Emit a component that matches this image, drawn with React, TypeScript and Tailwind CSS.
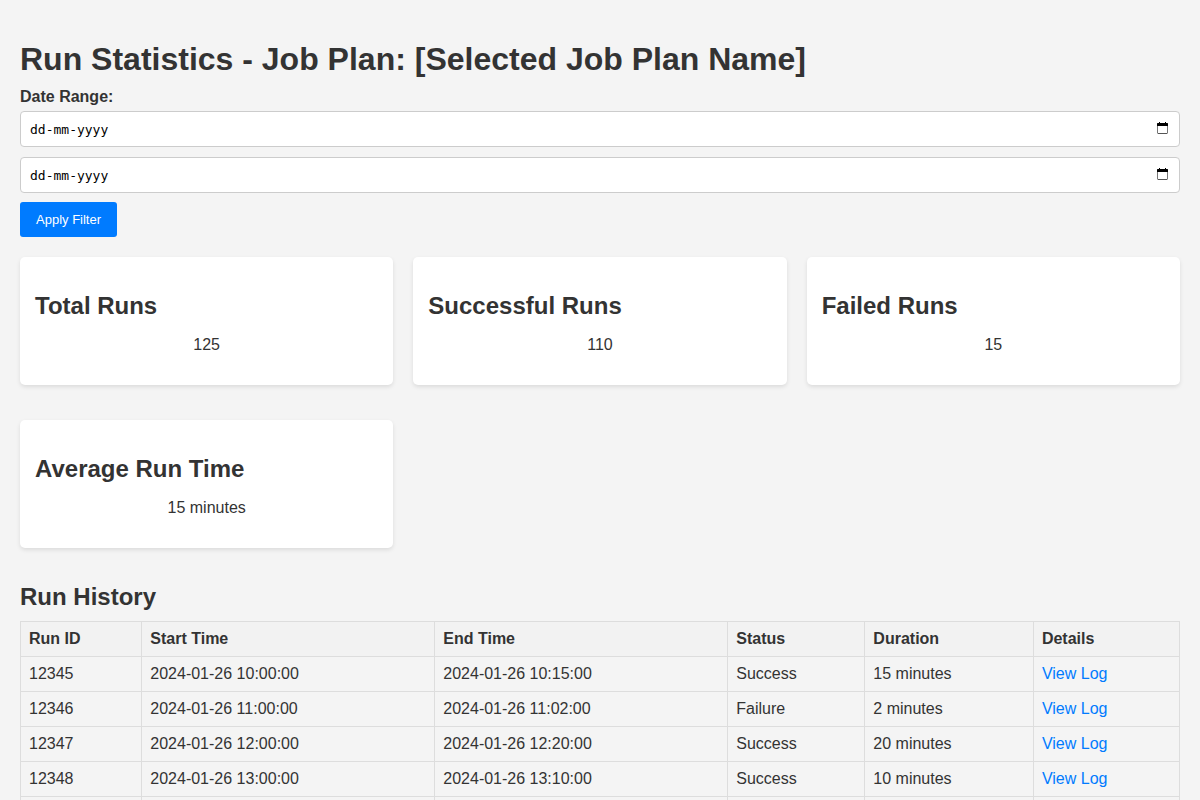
const stats = [
  { title: "Total Runs", value: "125" },
  { title: "Successful Runs", value: "110" },
  { title: "Failed Runs", value: "15" },
  { title: "Average Run Time", value: "15 minutes" },
];

const runs = [
  { id: "12345", start: "2024-01-26 10:00:00", end: "2024-01-26 10:15:00", status: "Success", duration: "15 minutes" },
  { id: "12346", start: "2024-01-26 11:00:00", end: "2024-01-26 11:02:00", status: "Failure", duration: "2 minutes" },
  { id: "12347", start: "2024-01-26 12:00:00", end: "2024-01-26 12:20:00", status: "Success", duration: "20 minutes" },
  { id: "12348", start: "2024-01-26 13:00:00", end: "2024-01-26 13:10:00", status: "Success", duration: "10 minutes" },
  { id: "12349", start: "2024-01-26 14:00:00", end: "2024-01-26 14:15:00", status: "Success", duration: "15 minutes" },
];

const columns = ["Run ID", "Start Time", "End Time", "Status", "Duration", "Details"];

function DateField({ id, label }: { id: string; label: string }) {
  return (
    <div className="relative">
      <input
        id={id}
        type="text"
        aria-label={label}
        placeholder="dd-mm-yyyy"
        className="block h-9 w-full rounded border border-[#ccc] bg-white px-[9px] font-['DejaVu_Sans_Mono',monospace] text-[13px] text-black placeholder:text-black"
      />
      <svg className="absolute top-[11px] right-3 h-3 w-[11px]" viewBox="0 0 11 12" aria-hidden="true">
        <path d="M2 0h1v1h5V0h1v1h1.5l.5.5V4H0V1.5L.5 1H2z" fill="#000" />
        <path d="M.5 4v7q0 .5.5.5h9q.5 0 .5-.5V4" fill="none" stroke="#777" />
        <path d="M1 11.5h9" fill="none" stroke="#555" />
      </svg>
    </div>
  );
}

export default function App() {
  return (
    <main className="min-h-screen bg-[#f4f4f4] p-5 font-['Liberation_Sans',Arial,sans-serif] text-base text-[#333]">
      <h1 className="mt-[21px] mb-2.5 text-[32px] leading-9 font-bold">Run Statistics - Job Plan: [Selected Job Plan Name]</h1>
      <form onSubmit={(e) => e.preventDefault()}>
        <label htmlFor="from" className="mb-1 block leading-5 font-bold">Date Range:</label>
        <div className="flex flex-col gap-2.5">
          <DateField id="from" label="Date Range: from" />
          <DateField id="to" label="Date Range: to" />
        </div>
        <button className="mt-[9px] block h-[35px] rounded-[3px] bg-[#007bff] px-4 text-[13px] text-white">Apply Filter</button>
      </form>
      <section className="mt-5 grid grid-cols-3 gap-x-5 gap-y-[35px]">
        {stats.map((s) => (
          <article key={s.title} className="rounded-[5px] bg-white px-[15px] pt-[35px] pb-[31px] shadow-[0_2px_4px_rgba(0,0,0,0.1)]">
            <h2 className="text-2xl leading-7 font-bold">{s.title}</h2>
            <p className="mt-4 text-center leading-[18px]">{s.value}</p>
          </article>
        ))}
      </section>
      <section className="mt-[35px]">
        <h2 className="mb-2.5 text-2xl leading-7 font-bold">Run History</h2>
        <table className="w-full border-collapse">
          <thead>
            <tr>
              {columns.map((c) => (
                <th key={c} className="border border-[#ddd] bg-[#f2f2f2] p-2 text-left leading-[18px] font-bold">{c}</th>
              ))}
            </tr>
          </thead>
          <tbody>
            {runs.map((r) => (
              <tr key={r.id}>
                {[r.id, r.start, r.end, r.status, r.duration].map((v, i) => (
                  <td key={i} className="border border-[#ddd] p-2 leading-[18px]">{v}</td>
                ))}
                <td className="border border-[#ddd] p-2 leading-[18px]">
                  <a href="#log" className="text-[#007bff]">View Log</a>
                </td>
              </tr>
            ))}
          </tbody>
        </table>
      </section>
    </main>
  );
}
